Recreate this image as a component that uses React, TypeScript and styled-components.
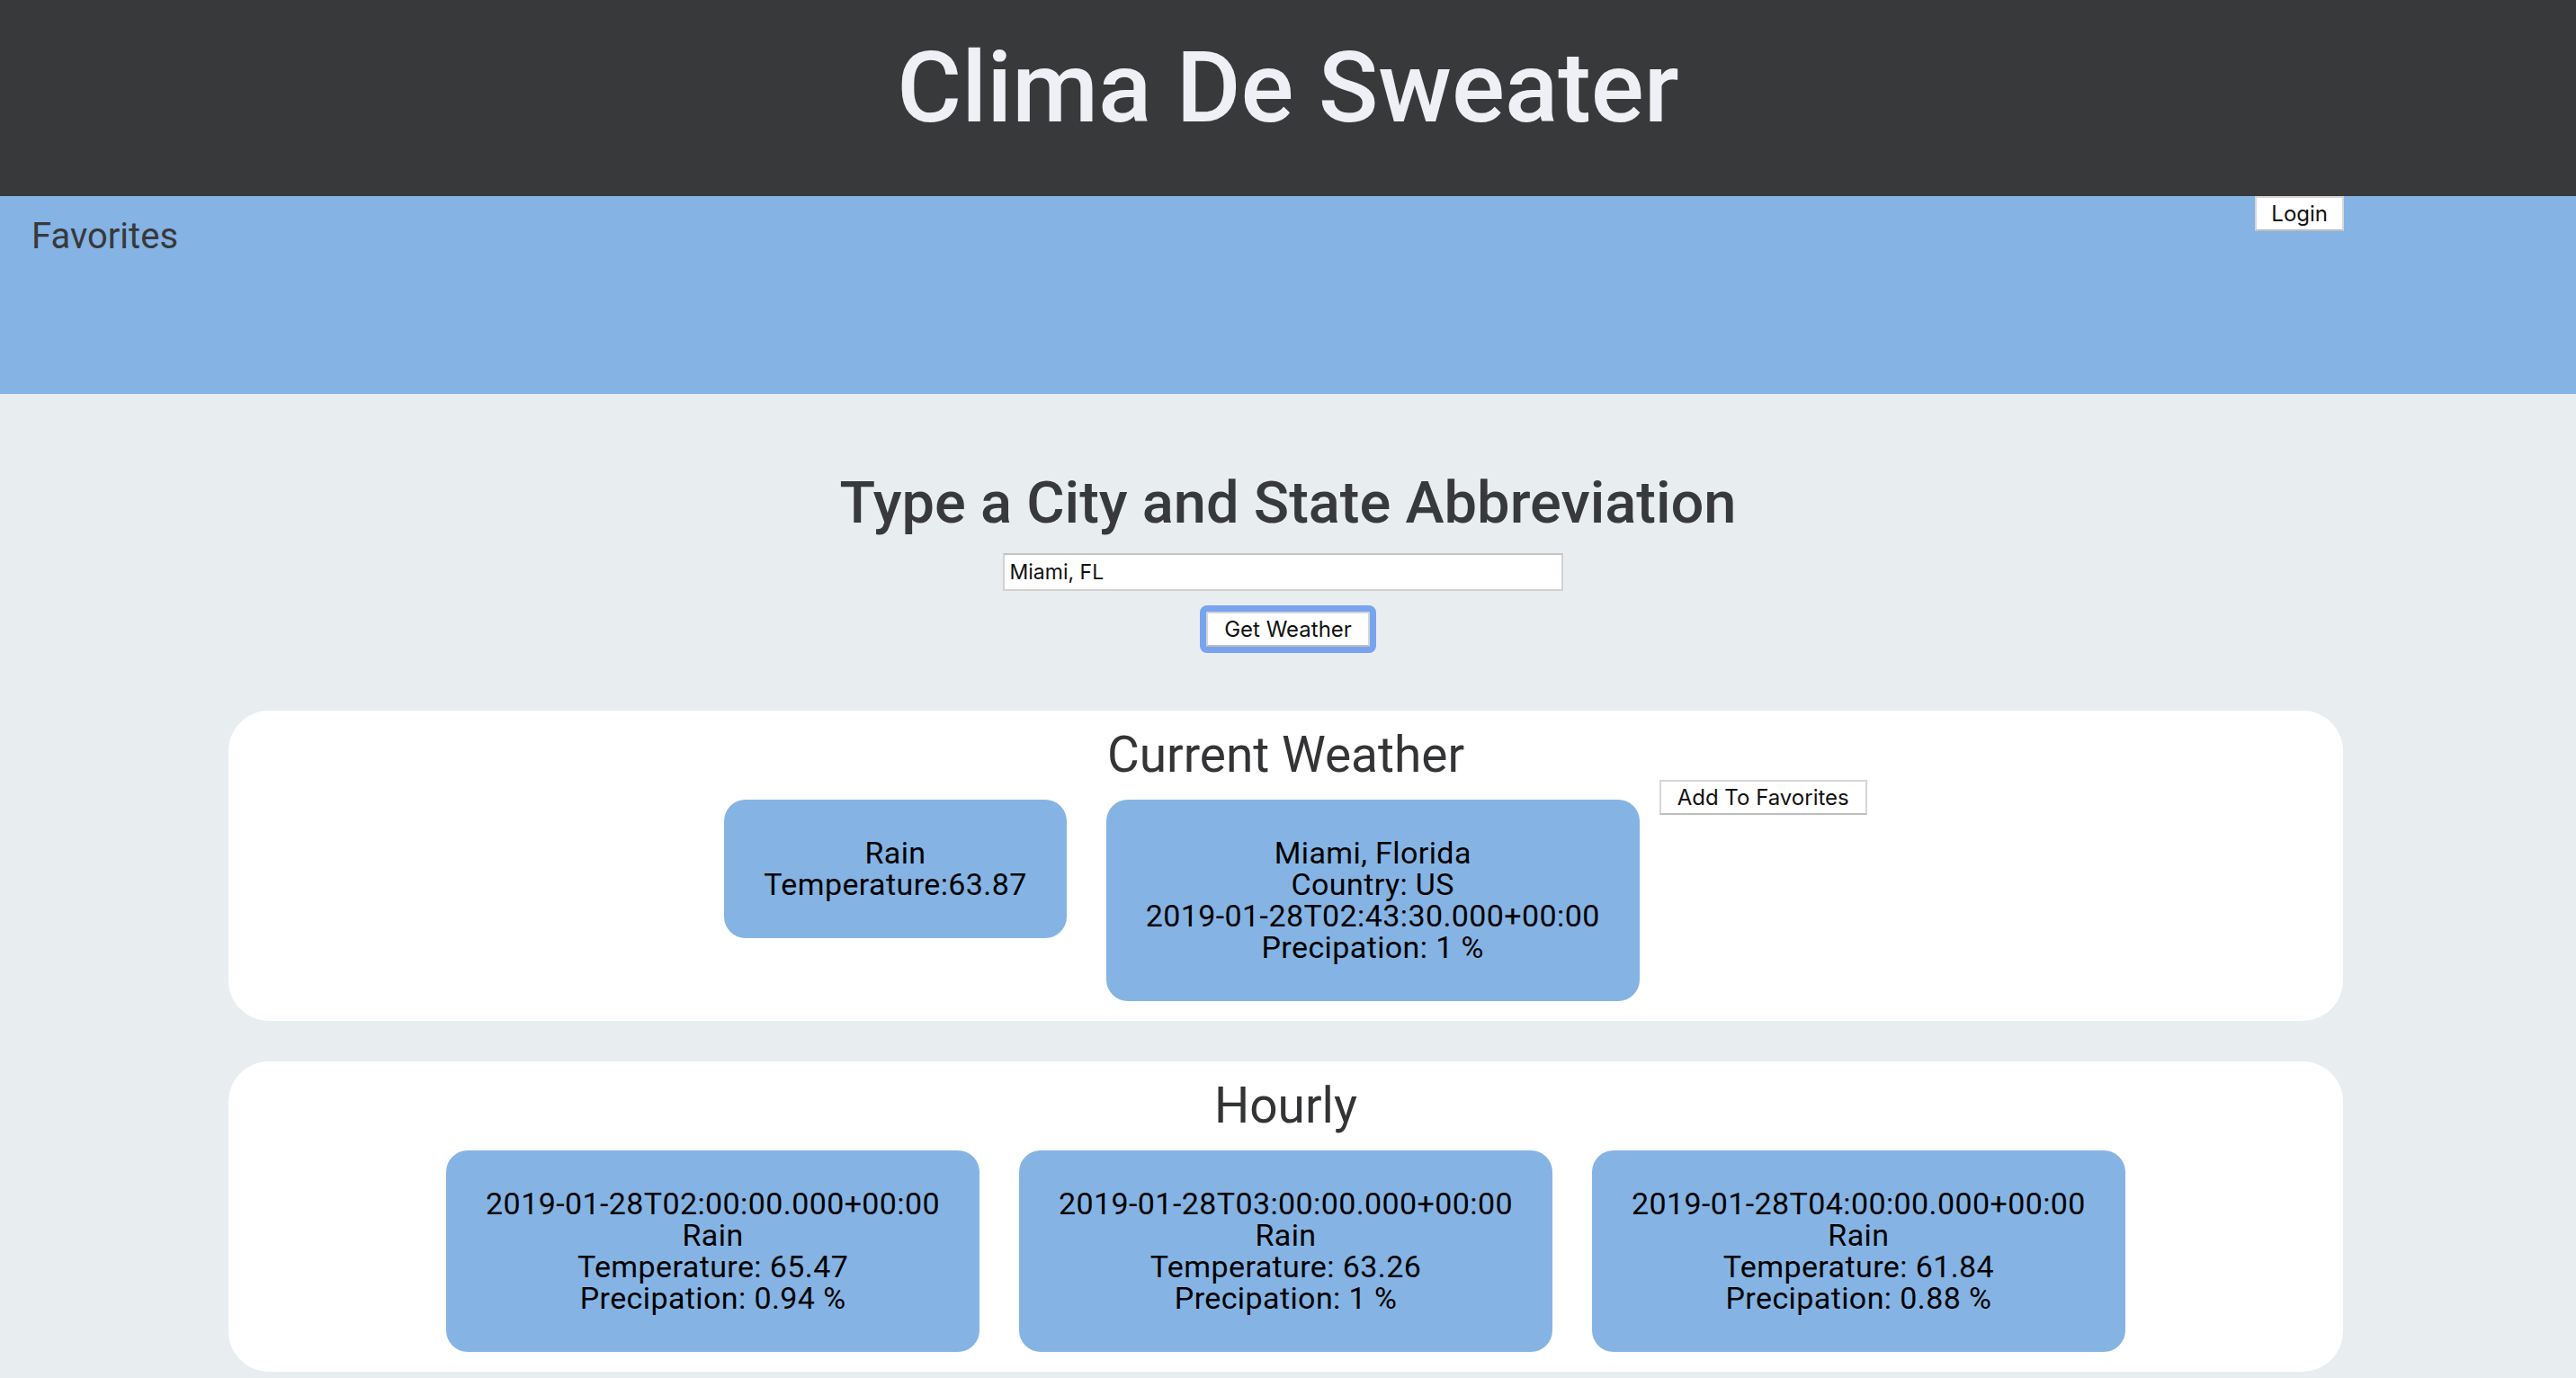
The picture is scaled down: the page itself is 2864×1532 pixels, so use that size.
import React from "react";
import styled, { createGlobalStyle } from "styled-components";

const GlobalStyle = createGlobalStyle`
  html, body {
    margin: 0;
    padding: 0;
    background: #e8edf0;
  }
  * { box-sizing: border-box; }
`;

const Page = styled.div`
  min-height: 100vh;
  background: #e8edf0;
  font-family: Roboto, "Liberation Sans", sans-serif;
  padding-bottom: 60px;
`;

const Header = styled.header`
  height: 218px;
  background: #38393b;
  display: flex;
  justify-content: center;
  align-items: flex-start;
`;

const Title = styled.h1`
  margin: 28px 0 0;
  font-family: Roboto, sans-serif;
  font-weight: 500;
  font-size: 110px;
  line-height: 140px;
  color: #eef0f5;
`;

const Nav = styled.nav`
  height: 220px;
  background: #84b3e4;
  display: flex;
  align-items: flex-start;
  padding: 0 258px 0 35px;
`;

const NavLink = styled.div`
  margin-top: 21px;
  font-family: Roboto, sans-serif;
  font-size: 40px;
  line-height: 47px;
  color: #38393b;
`;

const Spacer = styled.div`
  flex: 1;
`;

const PlainButton = styled.button<{ $focused?: boolean; $pad?: number }>`
  font-family: Inter, "Noto Sans", sans-serif;
  font-size: 24px;
  color: #111;
  background: #fff;
  border: 2px solid #d6d6d6;
  border-bottom-color: #bdbdbd;
  height: 39px;
  padding: 0 ${(p) => p.$pad ?? 18}px;
  border-radius: 1px;
  cursor: pointer;
  ${(p) =>
    p.$focused &&
    `
    outline: 7px solid #78a3ef;
    outline-offset: 0;
  `}
`;

const Search = styled.section`
  display: flex;
  flex-direction: column;
  align-items: center;
  padding-top: 80px;
`;

const SearchTitle = styled.h2`
  margin: 0;
  font-family: Roboto, sans-serif;
  font-weight: 500;
  font-size: 65px;
  line-height: 82px;
  color: #38393b;
`;

const CityInput = styled.input`
  margin-top: 15px;
  width: 623px;
  height: 42px;
  border: 2px solid #d2d2d2;
  border-top-color: #c4c4c4;
  background: #fff;
  font-family: Inter, "Noto Sans", sans-serif;
  font-size: 23px;
  padding: 0 6px;
  color: #111;
  margin-left: -12px;
`;

const ButtonRow = styled.div`
  margin-top: 23px;
`;

const Panel = styled.section<{ $gap?: number }>`
  margin: ${(p) => p.$gap ?? 0}px 259px 0 254px;
  background: #fff;
  border-radius: 45px;
  padding-top: 21px;
  text-align: center;
`;

const PanelTitle = styled.h3`
  margin: 0;
  font-family: Roboto, sans-serif;
  font-weight: 400;
  font-size: 55px;
  line-height: 56px;
  color: #333436;
`;

const CardRow = styled.div`
  display: flex;
  justify-content: center;
  align-items: flex-start;
`;

const WeatherCard = styled.div`
  margin: 22px;
  padding: 42px 44px;
  background: #85b4e4;
  border-radius: 24px;
  font-family: Roboto, sans-serif;
  font-size: 34px;
  line-height: 35px;
  letter-spacing: 0.4px;
  color: #000;
  text-align: center;
  white-space: nowrap;
`;

const Line = styled.div``;

const hourly = [
  { time: "2019-01-28T02:00:00.000+00:00", temp: "65.47", precip: "0.94" },
  { time: "2019-01-28T03:00:00.000+00:00", temp: "63.26", precip: "1" },
  { time: "2019-01-28T04:00:00.000+00:00", temp: "61.84", precip: "0.88" },
];

export default function App() {
  return (
    <>
      <GlobalStyle />
      <Page>
        <Header>
          <Title>Clima De Sweater</Title>
        </Header>
        <Nav>
          <NavLink>Favorites</NavLink>
          <Spacer />
          <PlainButton $pad={16}>Login</PlainButton>
        </Nav>
        <Search>
          <SearchTitle>Type a City and State Abbreviation</SearchTitle>
          <CityInput defaultValue="Miami, FL" />
          <ButtonRow>
            <PlainButton $focused>Get Weather</PlainButton>
          </ButtonRow>
        </Search>
        <Panel $gap={71}>
          <PanelTitle>Current Weather</PanelTitle>
          <CardRow>
            <WeatherCard>
              <Line>Rain</Line>
              <Line>Temperature:63.87</Line>
            </WeatherCard>
            <WeatherCard>
              <Line>Miami, Florida</Line>
              <Line>Country: US</Line>
              <Line>2019-01-28T02:43:30.000+00:00</Line>
              <Line>Precipation: 1 %</Line>
            </WeatherCard>
            <PlainButton>Add To Favorites</PlainButton>
          </CardRow>
        </Panel>
        <Panel $gap={45}>
          <PanelTitle>Hourly</PanelTitle>
          <CardRow>
            {hourly.map((h) => (
              <WeatherCard key={h.time}>
                <Line>{h.time}</Line>
                <Line>Rain</Line>
                <Line>Temperature: {h.temp}</Line>
                <Line>Precipation: {h.precip} %</Line>
              </WeatherCard>
            ))}
          </CardRow>
        </Panel>
      </Page>
    </>
  );
}
